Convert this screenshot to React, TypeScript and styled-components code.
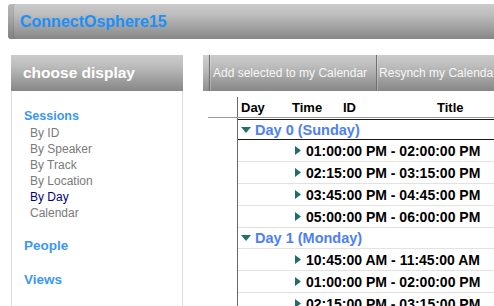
import React from "react";
import styled, { createGlobalStyle } from "styled-components";

const Global = createGlobalStyle`
  html, body { margin: 0; padding: 0; background: #fff; }
  body { font-family: "Liberation Sans", Arial, sans-serif; overflow: hidden; }
  * { box-sizing: border-box; }
`;

const Page = styled.div`
  width: 494px;
  height: 306px;
  overflow: hidden;
  padding: 4px 0 0 8px;
  white-space: nowrap;
`;

const grayBar = `
  background: linear-gradient(to bottom, #cbcbcb 0%, #bdbdbd 30%, #a2a2a2 65%, #878787 100%);
`;

const TopBar = styled.div`
  ${grayBar}
  height: 35px;
  margin-right: -10px;
  border-radius: 3px 0 0 3px;
  display: flex;
  align-items: center;
  padding-left: 12px;
  box-shadow: inset 5px 0 0 rgba(255, 255, 255, 0.08), inset 6px 0 0 rgba(0, 0, 0, 0.12);
`;

const AppTitle = styled.h1`
  margin: 0;
  font-size: 16px;
  font-weight: bold;
  color: #1a90f8;
`;

const Main = styled.div`
  display: flex;
  margin-top: 16px;
  gap: 20px;
`;

const SidePanel = styled.aside`
  flex: 0 0 172px;
  margin-left: 3px;
  height: 260px;
  border-left: 1px solid #dcdcdc;
  border-right: 1px solid #dcdcdc;
`;

const PanelHeader = styled.div`
  ${grayBar}
  height: 36px;
  margin: 0 -1px;
  display: flex;
  align-items: center;
  padding-left: 12px;
  color: #fff;
  font-size: 15.5px;
  font-weight: bold;
`;

const Nav = styled.nav`
  padding: 16px 0 0 12px;
`;

const Heading = styled.div<{ $size: number; $first?: boolean }>`
  font-size: ${(p) => p.$size}px;
  font-weight: bold;
  color: #3b97f7;
  line-height: 18px;
  margin-top: ${(p) => (p.$first ? 0 : 16)}px;
`;

const NavItem = styled.div<{ $active?: boolean }>`
  font-size: 12px;
  line-height: 16px;
  padding-left: 6px;
  color: ${(p) => (p.$active ? "#000080" : "#7a7a7a")};
`;

const RightCol = styled.section`
  flex: 1;
  min-width: 320px;
`;

const Toolbar = styled.div`
  ${grayBar}
  height: 36px;
  display: flex;
  align-items: stretch;
  padding-left: 6px;
  margin-right: -40px;
  box-shadow: inset 5px 0 0 rgba(255, 255, 255, 0.08);
`;

const ToolButton = styled.div<{ $padLeft: number; $padRight: number }>`
  display: flex;
  align-items: center;
  border-left: 1px solid #707070;
  box-shadow: inset 1px 0 0 rgba(255, 255, 255, 0.25);
  padding: 0 ${(p) => p.$padRight}px 0 ${(p) => p.$padLeft}px;
  color: #f6f6f6;
  font-size: 12px;
`;

const GridArea = styled.div`
  margin: 6px 0 0 5px;
`;

const GridHeader = styled.div`
  display: flex;
  height: 21px;
  border-bottom: 1px solid #9a9a9a;
`;

const RowHeaderCell = styled.div`
  flex: 0 0 30px;
  border-right: 1px solid #6a6a6a;
`;

const HeaderCell = styled.div<{ $w?: number }>`
  flex: ${(p) => (p.$w ? `0 0 ${p.$w}px` : "1")};
  padding: 3px 0 0 3px;
  font-size: 13px;
  font-weight: bold;
  color: #000;
`;

const GridBody = styled.div`
  display: flex;
`;

const RowHeaderCol = styled.div`
  flex: 0 0 30px;
  height: 200px;
  border-right: 1px solid #6a6a6a;
`;

const Rows = styled.div`
  flex: 1;
  padding-top: 1px;
`;

const RowsInner = styled.div`
  border-top: 1px solid #1a1a1a;
`;

const GroupRow = styled.div<{ $strong?: boolean }>`
  display: flex;
  align-items: center;
  height: ${(p) => (p.$strong ? 20 : 21)}px;
  padding-left: 3px;
  gap: 4px;
  border-bottom: 1px solid ${(p) => (p.$strong ? "#1a1a1a" : "#e2e2e2")};
  font-size: 14.5px;
  font-weight: bold;
  color: #4d80f6;
`;

const DataRow = styled.div`
  display: flex;
  align-items: center;
  height: 22px;
  padding-left: 57px;
  gap: 5px;
  border-bottom: 1px solid #e2e2e2;
  font-size: 14px;
  font-weight: bold;
  color: #000;
`;

const Down = () => (
  <svg width="10" height="6" viewBox="0 0 10 6">
    <path d="M0 0 H10 L5 6 Z" fill="#22706c" />
  </svg>
);

const Right = () => (
  <svg width="6" height="9" viewBox="0 0 6 9">
    <path d="M0 0 L6 4.5 L0 9 Z" fill="#1f6d69" />
  </svg>
);

const groups = [
  {
    label: "Day 0 (Sunday)",
    rows: [
      "01:00:00 PM - 02:00:00 PM",
      "02:15:00 PM - 03:15:00 PM",
      "03:45:00 PM - 04:45:00 PM",
      "05:00:00 PM - 06:00:00 PM",
    ],
  },
  {
    label: "Day 1 (Monday)",
    rows: [
      "10:45:00 AM - 11:45:00 AM",
      "01:00:00 PM - 02:00:00 PM",
      "02:15:00 PM - 03:15:00 PM",
    ],
  },
];

export default function App() {
  return (
    <Page>
      <Global />
      <TopBar>
        <AppTitle>ConnectOsphere15</AppTitle>
      </TopBar>
      <Main>
        <SidePanel>
          <PanelHeader>choose display</PanelHeader>
          <Nav>
            <Heading $size={12.5} $first>Sessions</Heading>
            <NavItem>By ID</NavItem>
            <NavItem>By Speaker</NavItem>
            <NavItem>By Track</NavItem>
            <NavItem>By Location</NavItem>
            <NavItem $active>By Day</NavItem>
            <NavItem>Calendar</NavItem>
            <Heading $size={13.5}>People</Heading>
            <Heading $size={13.5}>Views</Heading>
          </Nav>
        </SidePanel>
        <RightCol>
          <Toolbar>
            <ToolButton $padLeft={3} $padRight={9}>Add selected to my Calendar</ToolButton>
            <ToolButton $padLeft={2} $padRight={9}>Resynch my Calendar</ToolButton>
          </Toolbar>
          <GridArea>
            <GridHeader>
              <RowHeaderCell />
              <HeaderCell $w={51}>Day</HeaderCell>
              <HeaderCell $w={51}>Time</HeaderCell>
              <HeaderCell $w={94}>ID</HeaderCell>
              <HeaderCell>Title</HeaderCell>
            </GridHeader>
            <GridBody>
              <RowHeaderCol />
              <Rows>
                <RowsInner>
                  {groups.map((g, gi) => (
                    <React.Fragment key={g.label}>
                      <GroupRow $strong={gi === 0}>
                        <Down />
                        {g.label}
                      </GroupRow>
                      {g.rows.map((r, ri) => (
                        <DataRow key={r + ri}>
                          <Right />
                          {r}
                        </DataRow>
                      ))}
                    </React.Fragment>
                  ))}
                </RowsInner>
              </Rows>
            </GridBody>
          </GridArea>
        </RightCol>
      </Main>
    </Page>
  );
}
